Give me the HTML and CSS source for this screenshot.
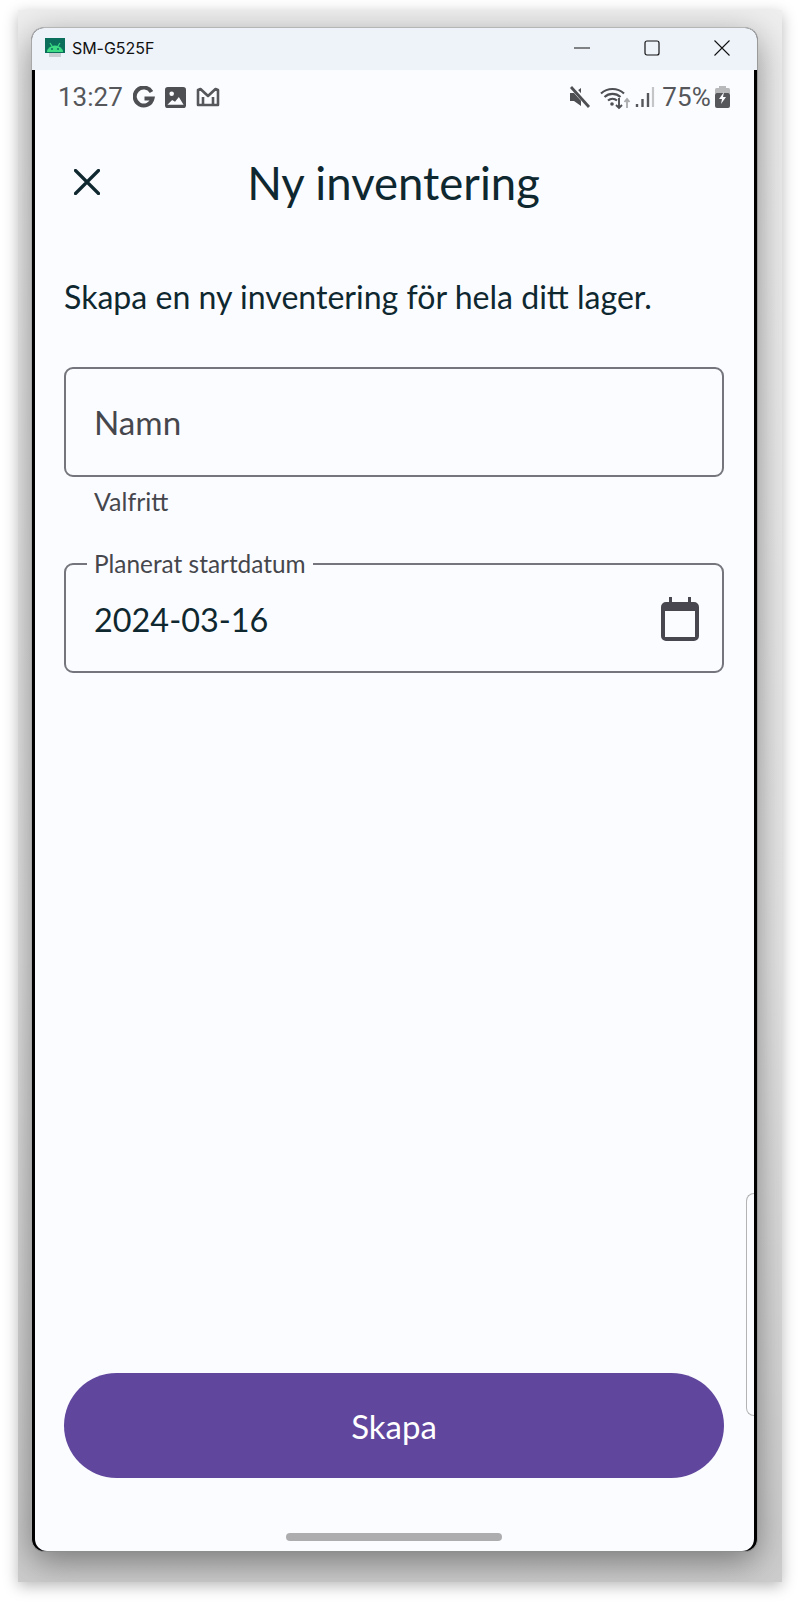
FILE: index.html
```html
<!DOCTYPE html>
<html lang="sv">
<head>
<meta charset="utf-8">
<title>Ny inventering</title>
<link rel="stylesheet" href="styles.css">
</head>
<body>
<div class="backdrop">
  <div class="window">
    <header class="titlebar">
      <div class="title-left">
        <svg class="app-icon" viewBox="0 0 20 20" width="20" height="20">
          <rect x="0" y="0" width="20" height="15" fill="#0c6f5c"/>
          <rect x="4" y="15" width="12" height="4" fill="#c9ced2"/>
          <path d="M2 14a8 6.5 0 0 1 16 0z" fill="#3ddc84"/>
          <path d="M5 5l2 3M15 5l-2 3" stroke="#3ddc84" stroke-width="1.2"/>
          <circle cx="7" cy="11" r="1" fill="#0c6f5c"/><circle cx="13" cy="11" r="1" fill="#0c6f5c"/>
        </svg>
        <span class="device">SM-G525F</span>
      </div>
      <div class="win-controls">
        <svg width="16" height="16" viewBox="0 0 16 16"><path d="M0 8h16" stroke="#111" stroke-width="1"/></svg>
        <svg width="16" height="16" viewBox="0 0 16 16"><rect x="1" y="1" width="14" height="14" rx="2" fill="none" stroke="#111" stroke-width="1.2"/></svg>
        <svg width="16" height="16" viewBox="0 0 16 16"><path d="M.5.5l15 15M15.500.5l-15 15" stroke="#111" stroke-width="1.1"/></svg>
      </div>
    </header>
    <main class="screen">
      <div class="statusbar">
        <div class="status-left">
          <span class="clock">13:27</span>
          <svg class="st-icon" width="22" height="23" viewBox="0 0 22 23"><path d="M18.500 6A9 9 0 1 0 19.500 12.500H11.500" fill="none" stroke="#4d4f52" stroke-width="4"/></svg>
          <svg class="st-icon" width="21" height="21" viewBox="0 0 22 22"><rect x="0" y="0" width="22" height="22" rx="3" fill="#4d4f52"/><circle cx="7" cy="7" r="2.400" fill="#fbfcff"/><path d="M2.500 18.500l5-5 3 2 4-5 5 8z" fill="#fbfcff"/></svg>
          <svg class="st-icon" width="24" height="20" viewBox="0 0 24 20"><path d="M2 18V3l2.500-1L12 9l7.500-7L22 3v15zM7 18V10M17 18V10" fill="none" stroke="#55575a" stroke-width="2.600" stroke-linejoin="round"/></svg>
        </div>
        <div class="status-right">
          <svg width="22" height="22" viewBox="0 0 22 22"><path d="M1 7h4l7-5v18l-7-5H1z" fill="#4d4f52"/><path d="M3 1l18 20" stroke="#fbfcff" stroke-width="5"/><path d="M2 1l18 20" stroke="#4d4f52" stroke-width="2.800"/></svg>
          <svg class="wifi" width="31" height="24" viewBox="0 0 31 24"><path d="M1 7.500a17 17 0 0 1 23 0M4.500 11a12 12 0 0 1 16 0M8 14.500a7 7 0 0 1 9 0" fill="none" stroke="#4d4f52" stroke-width="2.200"/><circle cx="12" cy="18" r="1.800" fill="#4d4f52"/><path d="M19 12v10M16 19l3 3 3-3" fill="none" stroke="#4d4f52" stroke-width="1.900"/><path d="M27 22v-9M24.500 16l2.500-3 2.500 3" fill="none" stroke="#a8aaac" stroke-width="1.800"/></svg>
          <svg class="signal" width="20" height="22" viewBox="0 0 20 22"><path d="M2 18v3M7.500 13v8M13 7v14" stroke="#55575a" stroke-width="2.400"/><path d="M18 1v20" stroke="#c3c5c7" stroke-width="2.200"/></svg>
          <span class="battery-pct">75%</span>
          <svg width="15" height="22" viewBox="0 0 15 22"><rect x="4" y="0" width="7" height="3" fill="#b7b9bb"/><rect x="0" y="2" width="15" height="6" rx="1.500" fill="#b7b9bb"/><rect x="0" y="7" width="15" height="15" rx="2" fill="#55575a"/><path d="M9 6L4 13h3l-1 5 5-7H8z" fill="#fbfcff"/></svg>
        </div>
      </div>

      <div class="appbar">
        <svg class="close" width="26" height="26" viewBox="0 0 26 26"><path d="M1.500 1.500l23 23M24.500 1.500l-23 23" stroke="#0f2830" stroke-width="3.200" stroke-linecap="round"/></svg>
        <h1 class="app-title">Ny inventering</h1>
      </div>

      <div class="content">
        <p class="lead">Skapa en ny inventering för hela ditt lager.</p>
        <div class="field">
          <span class="placeholder">Namn</span>
        </div>
        <p class="helper">Valfritt</p>
        <fieldset class="field field-date">
          <legend class="legend">Planerat startdatum</legend>
          <span class="value">2024-03-16</span>
          <svg class="cal" width="38" height="44" viewBox="0 0 38 44"><path d="M8 0h3v5h16V0h3v5h3a5 5 0 0 1 5 5v29a5 5 0 0 1-5 5H5a5 5 0 0 1-5-5V10a5 5 0 0 1 5-5h3z" fill="#48464f"/><rect x="4" y="14" width="30" height="26" fill="#fbfcff"/></svg>
        </fieldset>
      </div>

      <div class="actions">
        <button class="primary" type="button">Skapa</button>
      </div>
      <div class="home-row"><div class="home-bar"></div></div>
      <div class="edge-handle"></div>
    </main>
  </div>
</div>
</body>
</html>
```
FILE: styles.css
```css
* { box-sizing: border-box; }
html, body { margin: 0; height: 100%; background: #fff; }
body { padding: 10px 18px 26px; overflow: hidden; font-family: "Lato", "Liberation Sans", sans-serif; }

.backdrop {
  height: 1572px;
  width: 764px;
  padding: 17px 24px 30px 13px;
  background: linear-gradient(180deg, #eeeeee 0%, #e6e6e6 60%, #cdcdcd 100%);
  box-shadow: 0 4px 14px rgba(0,0,0,.28);
  overflow: hidden;
}
.window {
  height: 100%;
  display: flex;
  flex-direction: column;
  border-radius: 13px;
  border-top: 1px solid #b5b5b5;
  border-left: 1px solid #a8a8a8;
  border-right: 1px solid #9a9a9a;
  border-bottom: 1px solid #8e8e8e;
  background: #000;
  overflow: hidden;
  box-shadow: 0 10px 34px rgba(0,0,0,.42);
}
.titlebar {
  height: 42px;
  flex: none;
  background: #eef3fa;
  display: flex;
  align-items: center;
  justify-content: space-between;
  padding: 0 27px 2px 13px;
}
.title-left { display: flex; align-items: center; gap: 7px; }
.device { font: 16px "Inter", "Liberation Sans", sans-serif; color: #111; letter-spacing: -.05px; }
.win-controls { display: flex; gap: 54px; align-items: center; }
.win-controls svg { display: block; }

.screen {
  position: relative;
  flex: 1;
  display: flex;
  flex-direction: column;
  margin: 0 3px 0 3px;
  background: #fbfcff;
  border-bottom-left-radius: 12px;
  border-bottom-right-radius: 12px;
}
.statusbar {
  height: 50px;
  flex: none;
  display: flex;
  justify-content: space-between;
  align-items: center;
  padding: 4px 24px 0 23px;
  color: #55575a;
}
.status-left, .status-right { display: flex; align-items: center; }
.status-left { gap: 10px; }
.status-right { gap: 4px; }
.clock, .battery-pct { font: 26px "Roboto", "Liberation Sans", sans-serif; }
.wifi { margin: 2px 0 0 5px; }
.battery-pct { margin-left: 3px; letter-spacing: .2px; }
.status-left svg, .status-right svg { display: block; flex: none; }

.appbar {
  height: 135px;
  flex: none;
  position: relative;
  display: flex;
  align-items: center;
  justify-content: center;
  padding: 0 2px 10px 0;
}
.close { position: absolute; left: 39px; top: 49px; }
.app-title { margin: 0; font: 400 45.5px "Lato", sans-serif; color: #0f2830; }

.content { flex: 1; padding: 0 30px 0 29px; }
.lead { margin: 20px 0 0; font-size: 32.1px; line-height: 44px; color: #0f2830; }
.field {
  display: block;
  height: 110px;
  margin: 48px 0 0;
  padding: 0 28px;
  border: 2px solid #74757d;
  border-radius: 9px;
  display: flex;
  align-items: center;
}
.placeholder { font-size: 33.2px; color: #46474d; }
.helper { margin: 6px 0 0; padding-left: 30px; font-size: 25px; line-height: 36px; color: #46474d; }
.field-date {
  position: relative;
  margin: 36px 0 0;
  height: 118px;
  min-width: 0;
  padding: 0 28px;
}
.legend { padding: 0 7px 0 7px; margin-left: -7px; font-size: 24.4px; line-height: 18px; color: #46474d; }
.value { font-size: 32.4px; color: #0f2830; padding-bottom: 6px; }
.cal { position: absolute; right: 23px; top: 24px; }

.actions { flex: none; padding: 0 30px 0 29px; }
.primary {
  display: block;
  width: 100%;
  height: 105px;
  border: 0;
  border-radius: 53px;
  background: #60479d;
  color: #fff;
  font: 33px "Lato", sans-serif;
}
.home-row { flex: none; height: 73px; display: flex; justify-content: center; align-items: flex-end; padding: 0 2px 10px 0; }
.home-bar { width: 216px; height: 8px; border-radius: 4px; background: #adadb0; }
.edge-handle {
  position: absolute;
  right: 0;
  top: 1123px;
  width: 8px;
  height: 223px;
  border: 1.5px solid #b3b3b3;
  border-right: 0;
  border-radius: 8px 0 0 8px;
}
```
